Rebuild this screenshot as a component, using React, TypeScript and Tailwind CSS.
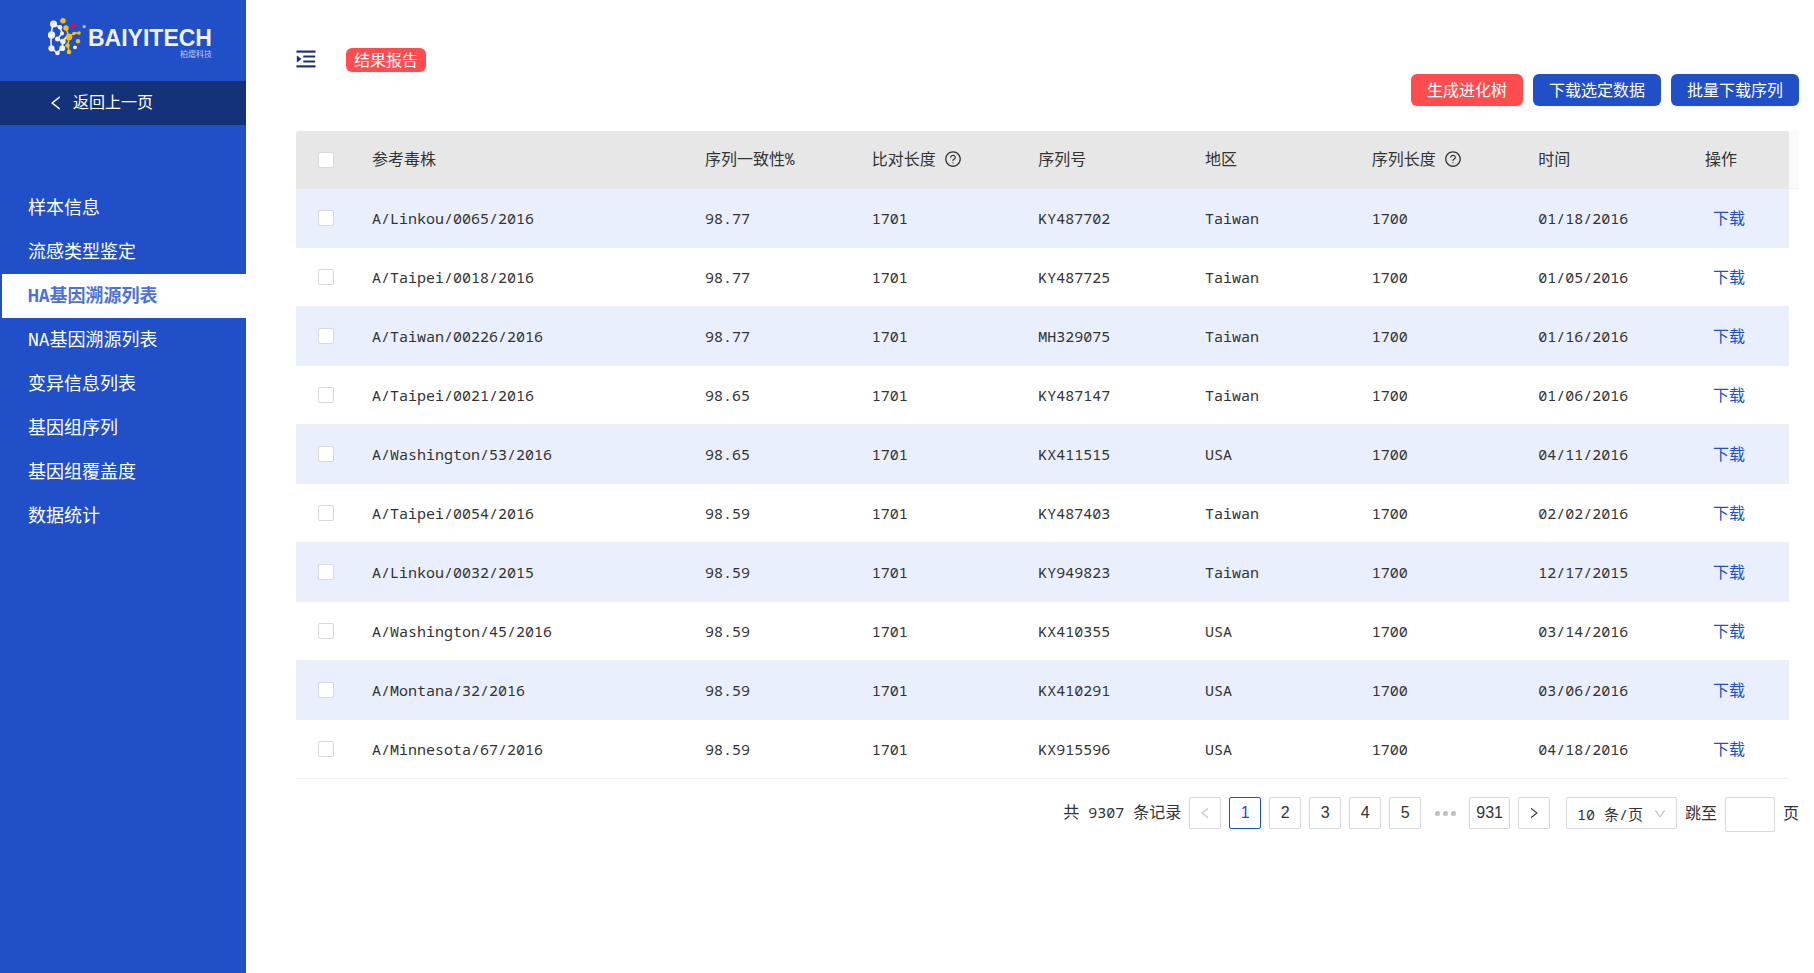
import { useState } from 'react'
import {
  AiOutlineDown,
  AiOutlineLeft,
  AiOutlineMenuUnfold,
  AiOutlineQuestionCircle,
  AiOutlineRight,
} from 'react-icons/ai'

interface Strain {
  name: string
  identity: string
  accession: string
  region: string
  date: string
}

const strains: Strain[] = [
  { name: 'A/Linkou/0065/2016', identity: '98.77', accession: 'KY487702', region: 'Taiwan', date: '01/18/2016' },
  { name: 'A/Taipei/0018/2016', identity: '98.77', accession: 'KY487725', region: 'Taiwan', date: '01/05/2016' },
  { name: 'A/Taiwan/00226/2016', identity: '98.77', accession: 'MH329075', region: 'Taiwan', date: '01/16/2016' },
  { name: 'A/Taipei/0021/2016', identity: '98.65', accession: 'KY487147', region: 'Taiwan', date: '01/06/2016' },
  { name: 'A/Washington/53/2016', identity: '98.65', accession: 'KX411515', region: 'USA', date: '04/11/2016' },
  { name: 'A/Taipei/0054/2016', identity: '98.59', accession: 'KY487403', region: 'Taiwan', date: '02/02/2016' },
  { name: 'A/Linkou/0032/2015', identity: '98.59', accession: 'KY949823', region: 'Taiwan', date: '12/17/2015' },
  { name: 'A/Washington/45/2016', identity: '98.59', accession: 'KX410355', region: 'USA', date: '03/14/2016' },
  { name: 'A/Montana/32/2016', identity: '98.59', accession: 'KX410291', region: 'USA', date: '03/06/2016' },
  { name: 'A/Minnesota/67/2016', identity: '98.59', accession: 'KX915596', region: 'USA', date: '04/18/2016' },
]

const menuItems = [
  '样本信息',
  '流感类型鉴定',
  'HA基因溯源列表',
  'NA基因溯源列表',
  '变异信息列表',
  '基因组序列',
  '基因组覆盖度',
  '数据统计',
]

const columns = [
  { title: '参考毒株' },
  { title: '序列一致性%' },
  { title: '比对长度', help: true },
  { title: '序列号' },
  { title: '地区' },
  { title: '序列长度', help: true },
  { title: '时间' },
  { title: '操作' },
]

const checkboxClass =
  'block size-4 mx-auto appearance-none rounded-xs border border-[#d9d9d9] bg-white checked:border-[#204fc8] checked:bg-[#204fc8]'

const pageClass =
  'flex h-8 min-w-8 items-center justify-center rounded-xs border px-[6px] font-["Liberation_Sans",sans-serif]'

function Logo() {
  return (
    <div className="flex h-[81px] items-start pt-[17px] pl-12 text-[#f1f1f1]">
      <svg width="39" height="40" viewBox="0 0 39 40" fill="none">
        <g stroke="#f1f1f1" strokeWidth="1.6">
          <path d="M5 7Q2 18 3.5 31L9 36 14 31 15 25 10 22 14 16 12 10 5 7M15 25 18 20" />
        </g>
        <g stroke="#fbc205" strokeWidth="1.6">
          <path d="M18 11 21 20 20 28 21 35M21 20 26 16 31 16" />
        </g>
        <g fill="#f1f1f1">
          <circle cx="5.5" cy="7" r="3.5" />
          <circle cx="12" cy="10.3" r="2.3" />
          <circle cx="3.5" cy="18" r="3.7" />
          <circle cx="14" cy="16.5" r="2" />
          <circle cx="9.5" cy="22" r="2.5" />
          <circle cx="15" cy="24.5" r="2.7" />
          <circle cx="3.5" cy="31.3" r="3.1" />
          <circle cx="14.3" cy="31.2" r="2.9" />
          <circle cx="9.5" cy="36" r="2.3" />
          <circle cx="27" cy="30.3" r="1.9" />
        </g>
        <g fill="#fbc205">
          <circle cx="15" cy="3.7" r="2.7" />
          <circle cx="18" cy="11" r="2.7" />
          <circle cx="21" cy="20" r="3.3" />
          <circle cx="19.5" cy="28.5" r="2.2" />
          <circle cx="21" cy="35" r="2.3" />
          <circle cx="26" cy="16.5" r="1.7" />
          <circle cx="31" cy="16" r="1.8" />
          <circle cx="30" cy="24.3" r="2.2" />
        </g>
        <circle cx="26" cy="8.3" r="2.3" fill="#f5053c" />
        <circle cx="36.2" cy="9.6" r="1.6" fill="#b9c3e6" />
      </svg>
      <div className="pt-[9px] pl-[1px]">
        <p className='font-["Liberation_Sans",sans-serif] text-[23px] leading-6 font-bold'>BAIYITECH</p>
        <p className="text-right text-[8px] leading-[8px] text-[#c3cdeb]">柏熠科技</p>
      </div>
    </div>
  )
}

function Sidebar() {
  return (
    <aside className="w-[246px] shrink-0 bg-[#204fc8] text-white">
      <Logo />
      <a href="#back" className="flex h-11 items-center gap-2 bg-[#143277] pb-0.5 pl-[47px] text-base">
        <AiOutlineLeft className="mt-0.5 size-[18px]" />
        返回上一页
      </a>
      <nav className="pt-[61px]">
        {menuItems.map((item, index) => (
          <a
            key={item}
            href={`#menu-${index}`}
            className={
              index === 2
                ? 'block h-11 border-l-2 border-[#204fc8] bg-white pl-[26px] text-lg leading-[42px] font-bold text-[#4d72d3]'
                : 'block h-11 border-l-2 border-[#204fc8] pl-[26px] text-lg leading-[42px]'
            }
          >
            {item}
          </a>
        ))}
      </nav>
    </aside>
  )
}

function StrainTable() {
  const [selected, setSelected] = useState<string[]>([])

  const toggle = (name: string) =>
    setSelected((prev) => (prev.includes(name) ? prev.filter((n) => n !== name) : [...prev, name]))

  return (
    <div className="flex items-start pl-0.5">
      <table className="w-full min-w-0 flex-1 table-fixed border-separate border-spacing-0 text-left">
        <colgroup>
          <col className="w-[60px]" />
          <col className="w-[333px]" />
          <col />
          <col />
          <col />
          <col />
          <col />
          <col />
          <col className="w-[100px]" />
        </colgroup>
        <thead>
          <tr className="h-[58px] bg-[#e7e7e7]">
            <th className="rounded-tl-xs">
              <input
                type="checkbox"
                aria-label="全选"
                className={checkboxClass}
                checked={selected.length === strains.length}
                onChange={(e) => setSelected(e.target.checked ? strains.map((s) => s.name) : [])}
              />
            </th>
            {columns.map((col) => (
              <th key={col.title} className="px-4 pb-0.5 font-normal last:rounded-tr-xs">
                <span className="flex items-center gap-2">
                  {col.title}
                  {col.help && <AiOutlineQuestionCircle className="size-[18px]" />}
                </span>
              </th>
            ))}
          </tr>
        </thead>
        <tbody className="text-[15px] [&_td]:border-b [&_td]:border-[#f0f0f0]">
          {strains.map((s) => (
            <tr key={s.name} className="h-[59px] odd:bg-[#e9effc]">
              <td>
                <input
                  type="checkbox"
                  aria-label={s.name}
                  className={checkboxClass}
                  checked={selected.includes(s.name)}
                  onChange={() => toggle(s.name)}
                />
              </td>
              <td className="px-4">{s.name}</td>
              <td className="px-4">{s.identity}</td>
              <td className="px-4">1701</td>
              <td className="px-4">{s.accession}</td>
              <td className="px-4">{s.region}</td>
              <td className="px-4">1700</td>
              <td className="px-4">{s.date}</td>
              <td className="px-4">
                <button className="px-2 text-base text-[#204fc8]">下载</button>
              </td>
            </tr>
          ))}
        </tbody>
      </table>
      <div className="h-[58px] w-[10px] border-b border-[#f0f0f0] bg-[#fafafa]" />
    </div>
  )
}

function Pagination() {
  return (
    <div className="flex items-start justify-end gap-2 pt-[18px] leading-8">
      <span className="leading-[30px]">
        共<span className="text-[15px]"> 9307 </span>条记录
      </span>
      <button aria-label="上一页" disabled className={`${pageClass} border-[#d9d9d9] text-[#bfbfbf]`}>
        <AiOutlineLeft className="size-3.5" />
      </button>
      {[1, 2, 3, 4, 5].map((page) => (
        <button
          key={page}
          className={`${pageClass} ${page === 1 ? 'border-[#204fc8] text-[#204fc8]' : 'border-[#d9d9d9]'}`}
        >
          {page}
        </button>
      ))}
      <span className="flex h-8 w-8 items-center justify-center gap-[3px]">
        <i className="size-[5px] rounded-full bg-[#bfbfbf]" />
        <i className="size-[5px] rounded-full bg-[#bfbfbf]" />
        <i className="size-[5px] rounded-full bg-[#bfbfbf]" />
      </span>
      <button className={`${pageClass} border-[#d9d9d9]`}>931</button>
      <button aria-label="下一页" className={`${pageClass} border-[#d9d9d9]`}>
        <AiOutlineRight className="size-3.5" />
      </button>
      <div className="relative ml-2">
        <select
          aria-label="每页条数"
          className="block h-8 w-[111px] appearance-none rounded-xs border border-[#d9d9d9] bg-white pb-1 pl-[10px] text-[15px]"
        >
          <option>10 条/页</option>
          <option>20 条/页</option>
        </select>
        <AiOutlineDown className="pointer-events-none absolute top-[10px] right-[10px] size-3.5 text-[#bfbfbf]" />
      </div>
      <label htmlFor="jump">跳至</label>
      <input id="jump" className="h-[35px] w-[50px] rounded-xs border border-[#d9d9d9] px-2" />
      <span>页</span>
    </div>
  )
}

export default function App() {
  return (
    <div className='flex min-h-screen bg-white font-["Noto_Sans_Mono","Liberation_Mono","Noto_Sans_CJK_SC",monospace] text-base text-[#333]'>
      <Sidebar />
      <main className="min-w-0 flex-1 pr-[15px] pl-12">
        <header className="flex items-start pt-[47px]">
          <button aria-label="收起菜单" className="text-[#143277]">
            <AiOutlineMenuUnfold className="size-6" stroke="currentColor" strokeWidth="16" />
          </button>
          <span className="mt-px ml-7 h-6 rounded-md bg-[#ff4d4f] px-2 leading-6 text-white shadow-xs">结果报告</span>
        </header>
        {/* 操作按钮 */}
        <div className="flex justify-end gap-[10px] pt-0.5 pb-[25px] text-white">
          <button className="h-8 rounded-md bg-[#ff4d4f] px-4 shadow-xs">生成进化树</button>
          <button className="h-8 rounded-md bg-[#204fc8] px-4 shadow-xs">下载选定数据</button>
          <button className="h-8 rounded-md bg-[#204fc8] px-4 shadow-xs">批量下载序列</button>
        </div>
        <StrainTable />
        <Pagination />
      </main>
    </div>
  )
}
